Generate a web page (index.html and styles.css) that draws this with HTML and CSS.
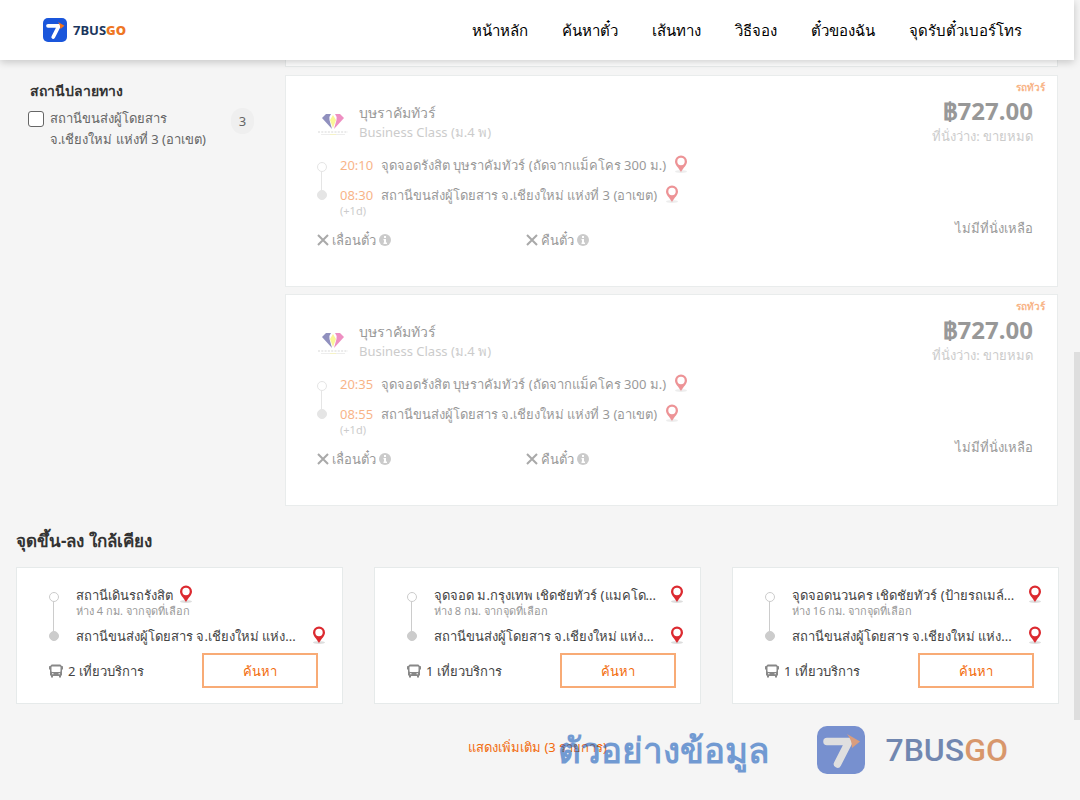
FILE: index.html
```html
<!DOCTYPE html>
<html lang="th">
<head>
<meta charset="utf-8">
<title>7BUSGO</title>
<link rel="stylesheet" href="styles.css">
</head>
<body>
<svg class="defs" aria-hidden="true">
  <symbol id="logo" viewBox="0 0 48 48">
    <rect class="logo-tile" width="48" height="48" rx="10"/>
    <path class="logo-seven" d="M10 15.500H32L20.500 38" fill="none" stroke-width="7.500" stroke-linecap="round" stroke-linejoin="round"/>
    <path class="logo-arrow" d="M30 8L43 15.500L35 22Q35 14 30 8Z"/>
  </symbol>
  <symbol id="pin" viewBox="0 0 14 18">
    <ellipse cx="7" cy="16.500" rx="6" ry="1.400" fill="#ddd"/>
    <path fill="#dc2a30" fill-rule="evenodd" d="M7 .5a6 6 0 0 0-6 6C1 10 4.500 12.500 7 17C9.500 12.500 13 10 13 6.500A6 6 0 0 0 7 .5ZM7 2.800a3.700 3.700 0 1 1 0 7.400a3.700 3.700 0 0 1 0-7.400Z"/>
  </symbol>
  <symbol id="gem" viewBox="0 0 32 26">
    <path d="M5 8L9 4H14Q12 6 12.500 10L15 19Z" fill="#24247f"/>
    <path d="M27 8L23 4H18Q20 6 19.500 10L17 19Z" fill="#df2286"/>
    <path d="M16 5L19 10L16 18L13 10Z" fill="#f7ee32"/>
    <path d="M1 22H31" stroke="#ccc" stroke-width="1.500" stroke-dasharray="2 1.300"/>
    <path d="M4 24.500H28" stroke="#ddd"/>
    <path d="M13 24.500H19" stroke="#eee890"/>
  </symbol>
  <symbol id="cross" viewBox="0 0 12 12">
    <path d="M1 1L11 11M11 1L1 11" fill="none" stroke="#555" stroke-width="2"/>
  </symbol>
  <symbol id="info" viewBox="0 0 12 12">
    <circle cx="6" cy="6" r="6" fill="#999"/>
    <path d="M5 2h2v2H5zM4.500 5H7v3.500h1V10H4.500V8.500H5V6.300h-.5z" fill="#fff"/>
  </symbol>
  <symbol id="bus" viewBox="0 0 14 14">
    <path fill="#888" fill-rule="evenodd" d="M3 .5H11Q12.500 .5 12.500 2H13.300Q14 2 14 3V5.500H13V11.500H12V13.500H10V12H4V13.500H2V11.500H1V5.500H0V3Q0 2 .7 2H1.500Q1.500 .5 3 .5ZM3 2.500Q2.500 2.500 2.500 3V7Q2.500 7.800 3.300 8H10.700Q11.500 7.800 11.500 7V3Q11.500 2.500 11 2.500ZM3 9.300V10.300H4.500V9.300ZM9.500 9.300V10.300H11V9.300Z"/>
  </symbol>
</svg>
<div class="viewport">
  <header class="topbar">
    <a class="brand" href="#"><svg class="brand-mark"><use href="#logo"/></svg><span>7BUS<b>GO</b></span></a>
    <nav class="nav">
      <a href="#">หน้าหลัก</a>
      <a href="#">ค้นหาตั๋ว</a>
      <a href="#">เส้นทาง</a>
      <a href="#">วิธีจอง</a>
      <a href="#">ตั๋วของฉัน</a>
      <a href="#">จุดรับตั๋วเบอร์โทร</a>
    </nav>
  </header>

  <main class="page">
    <div class="search">
      <aside class="filters">
        <h2 class="filter-title">สถานีปลายทาง</h2>
        <div class="filter-row">
          <input type="checkbox" id="station">
          <label for="station">สถานีขนส่งผู้โดยสาร<br>จ.เชียงใหม่ แห่งที่ 3 (อาเขต)</label>
          <span class="count">3</span>
        </div>
      </aside>
      <section class="results">
        <div class="trip trip-end"></div>
        <article class="trip">
          <div class="trip-info">
            <div class="operator">
              <svg class="operator-logo"><use href="#gem"/></svg>
              <div><h3>บุษราคัมทัวร์</h3><p>Business Class (ม.4 พ)</p></div>
            </div>
            <div class="route">
              <div class="line"></div>
              <div class="stops">
                <div class="stop"><time>20:10</time><span>จุดจอดรังสิต บุษราคัมทัวร์ (ถัดจากแม็คโคร 300 ม.)</span><svg class="pin"><use href="#pin"/></svg></div>
                <div class="stop"><time>08:30</time><span>สถานีขนส่งผู้โดยสาร จ.เชียงใหม่ แห่งที่ 3 (อาเขต)</span><svg class="pin"><use href="#pin"/></svg></div>
                <div class="nextday">(+1d)</div>
              </div>
            </div>
            <div class="policies">
              <span class="policy"><svg><use href="#cross"/></svg>เลื่อนตั๋ว<svg><use href="#info"/></svg></span>
              <span class="policy"><svg><use href="#cross"/></svg>คืนตั๋ว<svg><use href="#info"/></svg></span>
            </div>
          </div>
          <div class="fare">
            <div class="kind">รถทัวร์</div>
            <div class="price">฿727.00</div>
            <div class="seats">ที่นั่งว่าง: ขายหมด</div>
            <div class="soldout">ไม่มีที่นั่งเหลือ</div>
          </div>
        </article>
        <article class="trip">
          <div class="trip-info">
            <div class="operator">
              <svg class="operator-logo"><use href="#gem"/></svg>
              <div><h3>บุษราคัมทัวร์</h3><p>Business Class (ม.4 พ)</p></div>
            </div>
            <div class="route">
              <div class="line"></div>
              <div class="stops">
                <div class="stop"><time>20:35</time><span>จุดจอดรังสิต บุษราคัมทัวร์ (ถัดจากแม็คโคร 300 ม.)</span><svg class="pin"><use href="#pin"/></svg></div>
                <div class="stop"><time>08:55</time><span>สถานีขนส่งผู้โดยสาร จ.เชียงใหม่ แห่งที่ 3 (อาเขต)</span><svg class="pin"><use href="#pin"/></svg></div>
                <div class="nextday">(+1d)</div>
              </div>
            </div>
            <div class="policies">
              <span class="policy"><svg><use href="#cross"/></svg>เลื่อนตั๋ว<svg><use href="#info"/></svg></span>
              <span class="policy"><svg><use href="#cross"/></svg>คืนตั๋ว<svg><use href="#info"/></svg></span>
            </div>
          </div>
          <div class="fare">
            <div class="kind">รถทัวร์</div>
            <div class="price">฿727.00</div>
            <div class="seats">ที่นั่งว่าง: ขายหมด</div>
            <div class="soldout">ไม่มีที่นั่งเหลือ</div>
          </div>
        </article>
      </section>
    </div>

    <section class="nearby">
      <h2>จุดขึ้น-ลง ใกล้เคียง</h2>
      <div class="cards">
        <article class="card">
          <div class="card-route">
            <div class="line"></div>
            <div class="card-stops">
              <div class="card-stop"><span>สถานีเดินรถรังสิต</span><svg class="pin"><use href="#pin"/></svg></div>
              <p>ห่าง 4 กม. จากจุดที่เลือก</p>
              <div class="card-stop"><span class="wide">สถานีขนส่งผู้โดยสาร จ.เชียงใหม่ แห่ง...</span><svg class="pin"><use href="#pin"/></svg></div>
            </div>
          </div>
          <div class="card-foot"><span class="service"><svg><use href="#bus"/></svg>2 เที่ยวบริการ</span><button type="button">ค้นหา</button></div>
        </article>
        <article class="card">
          <div class="card-route">
            <div class="line"></div>
            <div class="card-stops">
              <div class="card-stop"><span class="wide">จุดจอด ม.กรุงเทพ เชิดชัยทัวร์ (แมคโด...</span><svg class="pin"><use href="#pin"/></svg></div>
              <p>ห่าง 8 กม. จากจุดที่เลือก</p>
              <div class="card-stop"><span class="wide">สถานีขนส่งผู้โดยสาร จ.เชียงใหม่ แห่ง...</span><svg class="pin"><use href="#pin"/></svg></div>
            </div>
          </div>
          <div class="card-foot"><span class="service"><svg><use href="#bus"/></svg>1 เที่ยวบริการ</span><button type="button">ค้นหา</button></div>
        </article>
        <article class="card">
          <div class="card-route">
            <div class="line"></div>
            <div class="card-stops">
              <div class="card-stop"><span class="wide">จุดจอดนวนคร เชิดชัยทัวร์ (ป้ายรถเมล์...</span><svg class="pin"><use href="#pin"/></svg></div>
              <p>ห่าง 16 กม. จากจุดที่เลือก</p>
              <div class="card-stop"><span class="wide">สถานีขนส่งผู้โดยสาร จ.เชียงใหม่ แห่ง...</span><svg class="pin"><use href="#pin"/></svg></div>
            </div>
          </div>
          <div class="card-foot"><span class="service"><svg><use href="#bus"/></svg>1 เที่ยวบริการ</span><button type="button">ค้นหา</button></div>
        </article>
      </div>
      <a class="more" href="#">แสดงเพิ่มเติม (3 รายการ)</a>
    </section>
  </main>
  <div class="scroll-thumb"></div>
  <div class="watermark">
    <span class="sample">ตัวอย่างข้อมูล</span>
    <svg class="watermark-mark"><use href="#logo"/></svg>
    <span class="watermark-name">7BUS<b>GO</b></span>
  </div>
</div>
</body>
</html>
```

FILE: styles.css
```css
* { box-sizing: border-box; }
body {
  --tile: #1a56db;
  --seven: #fff;
  --arrow: #f97316;
  margin: 0;
  background: #f5f5f5;
  color: #333;
  font: 13px/20px "Noto Sans", sans-serif;
}
h2, h3, p { margin: 0; }
a { color: inherit; text-decoration: none; }
svg { flex: none; }
.defs { display: none; }
.logo-tile { fill: var(--tile); }
.logo-seven { stroke: var(--seven); }
.logo-arrow { fill: var(--arrow); }
.viewport { position: relative; min-height: 100vh; padding-right: 6px; overflow: hidden; }

.topbar {
  position: relative;
  display: flex;
  align-items: center;
  justify-content: space-between;
  height: 60px;
  padding: 0 52px 0 43px;
  background: #fff;
  box-shadow: 0 2px 8px rgba(0, 0, 0, .2);
}
.brand { display: flex; align-items: center; gap: 6px; color: #1b365d; font-weight: 700; }
.brand b { color: #ee7624; }
.brand-mark { width: 24px; height: 24px; }
.nav { display: flex; gap: 34px; color: #000; font-size: 15px; }

.search { display: grid; grid-template-columns: 285px 1fr; padding-right: 16px; }
.filters { padding: 21px 31px 0 28px; }
.filter-title { padding-left: 2px; font-size: 14px; line-height: 20px; }
.filter-row { display: flex; align-items: flex-start; gap: 6px; margin-top: 7px; color: #666; line-height: 21px; }
.filter-row label { flex: 1; white-space: nowrap; }
.filter-row input {
  appearance: none;
  width: 16px;
  height: 16px;
  margin: 3px 0 0;
  border: 1px solid #666;
  border-radius: 3px;
  background: #fff;
}
.count { width: 23px; height: 26px; border-radius: 13px; background: #efefef; line-height: 26px; text-align: center; }

.results { display: flex; flex-direction: column; gap: 7px; }
.trip {
  display: flex;
  justify-content: space-between;
  min-height: 212px;
  padding: 0 24px 0 31px;
  border: 1px solid #e9ecec;
  background: #fff;
}
.trip-end { min-height: 7px; margin-bottom: 1px; border-top: 0; }
.trip-info { flex: 1; padding-top: 27px; opacity: .5; }
.operator { display: flex; align-items: center; gap: 10px; }
.operator-logo { width: 32px; height: 26px; }
.operator h3 { font-size: 14px; line-height: 20px; font-weight: 500; }
.operator p { color: #999; line-height: 19px; }
.route { display: flex; gap: 14px; margin-top: 13px; }
.line {
  display: flex;
  flex-direction: column;
  align-items: center;
  width: 9px;
  background: linear-gradient(#ccc, #ccc) center / 1px 100% no-repeat;
}
.line::before, .line::after { content: ""; width: 8px; height: 8px; border: 1px solid #ccc; border-radius: 50%; background: #fff; }
.line::after { margin-top: auto; background: #ccc; }
.route .line { height: 38px; margin-top: 7px; }
.stop { display: flex; height: 30px; }
.stop time { width: 41px; color: #f26b0c; }
.stop .pin { margin-left: 8px; }
.pin { width: 14px; height: 18px; }
.nextday { height: 12px; margin-top: -10px; color: #999; font-size: 11px; line-height: 12px; }
.policies { display: flex; margin-top: 13px; }
.policy { display: flex; align-items: center; gap: 3px; width: 209px; }
.policy svg { width: 12px; height: 12px; }
.fare { display: flex; flex-direction: column; align-items: flex-end; opacity: .5; }
.kind { margin: 4px -12px 0 0; color: #f26b0c; font-size: 10px; line-height: 14px; font-weight: 700; }
.price { font-size: 24px; line-height: 34px; font-weight: 700; }
.seats { color: #999; line-height: 16px; }
.soldout { margin-top: 74px; }

.nearby { padding: 25px 15px 0 16px; }
.nearby h2 { font-size: 17px; line-height: 20px; }
.cards { display: grid; grid-template-columns: repeat(3, 1fr); gap: 31px; margin-top: 16px; }
.card { padding: 17px 16px 15px 32px; border: 1px solid #e6eaea; background: #fff; color: #444; }
.card-route { display: flex; gap: 18px; }
.card-route .line { height: 49px; margin-top: 7px; }
.card-stops { flex: 1; }
.card-stop { display: flex; gap: 6px; height: 20px; white-space: nowrap; }
.card-stop .wide { flex: 1; }
.card-stops p { height: 21px; color: #999; font-size: 11px; line-height: 12px; }
.card-foot { display: flex; align-items: center; justify-content: space-between; margin-top: 7px; padding-right: 8px; }
.service { display: flex; align-items: center; gap: 5px; }
.service svg { width: 14px; height: 14px; }
button {
  width: 116px;
  height: 35px;
  border: 2px solid #f8ab76;
  background: #fff;
  color: #f26b0c;
  font: inherit;
}
.more { display: block; margin-top: 33px; color: #f26b0c; text-align: center; }

.scroll-thumb { position: absolute; top: 352px; right: 0; width: 6px; height: 368px; background: #dedede; }
.watermark {
  --tile: #254eb7;
  --seven: #d2d2d2;
  --arrow: #c76430;
  position: absolute;
  right: 72px;
  bottom: 26px;
  display: flex;
  align-items: center;
  opacity: .6;
  color: #1b3f83;
}
.sample { color: #1a5fbc; font-size: 35px; line-height: 48px; font-weight: 700; }
.watermark-mark { width: 48px; height: 48px; margin: 0 20px 0 48px; }
.watermark-name { font: 500 32px/48px Roboto, sans-serif; }
.watermark-name b { color: #c55a11; font-weight: 500; }
```
